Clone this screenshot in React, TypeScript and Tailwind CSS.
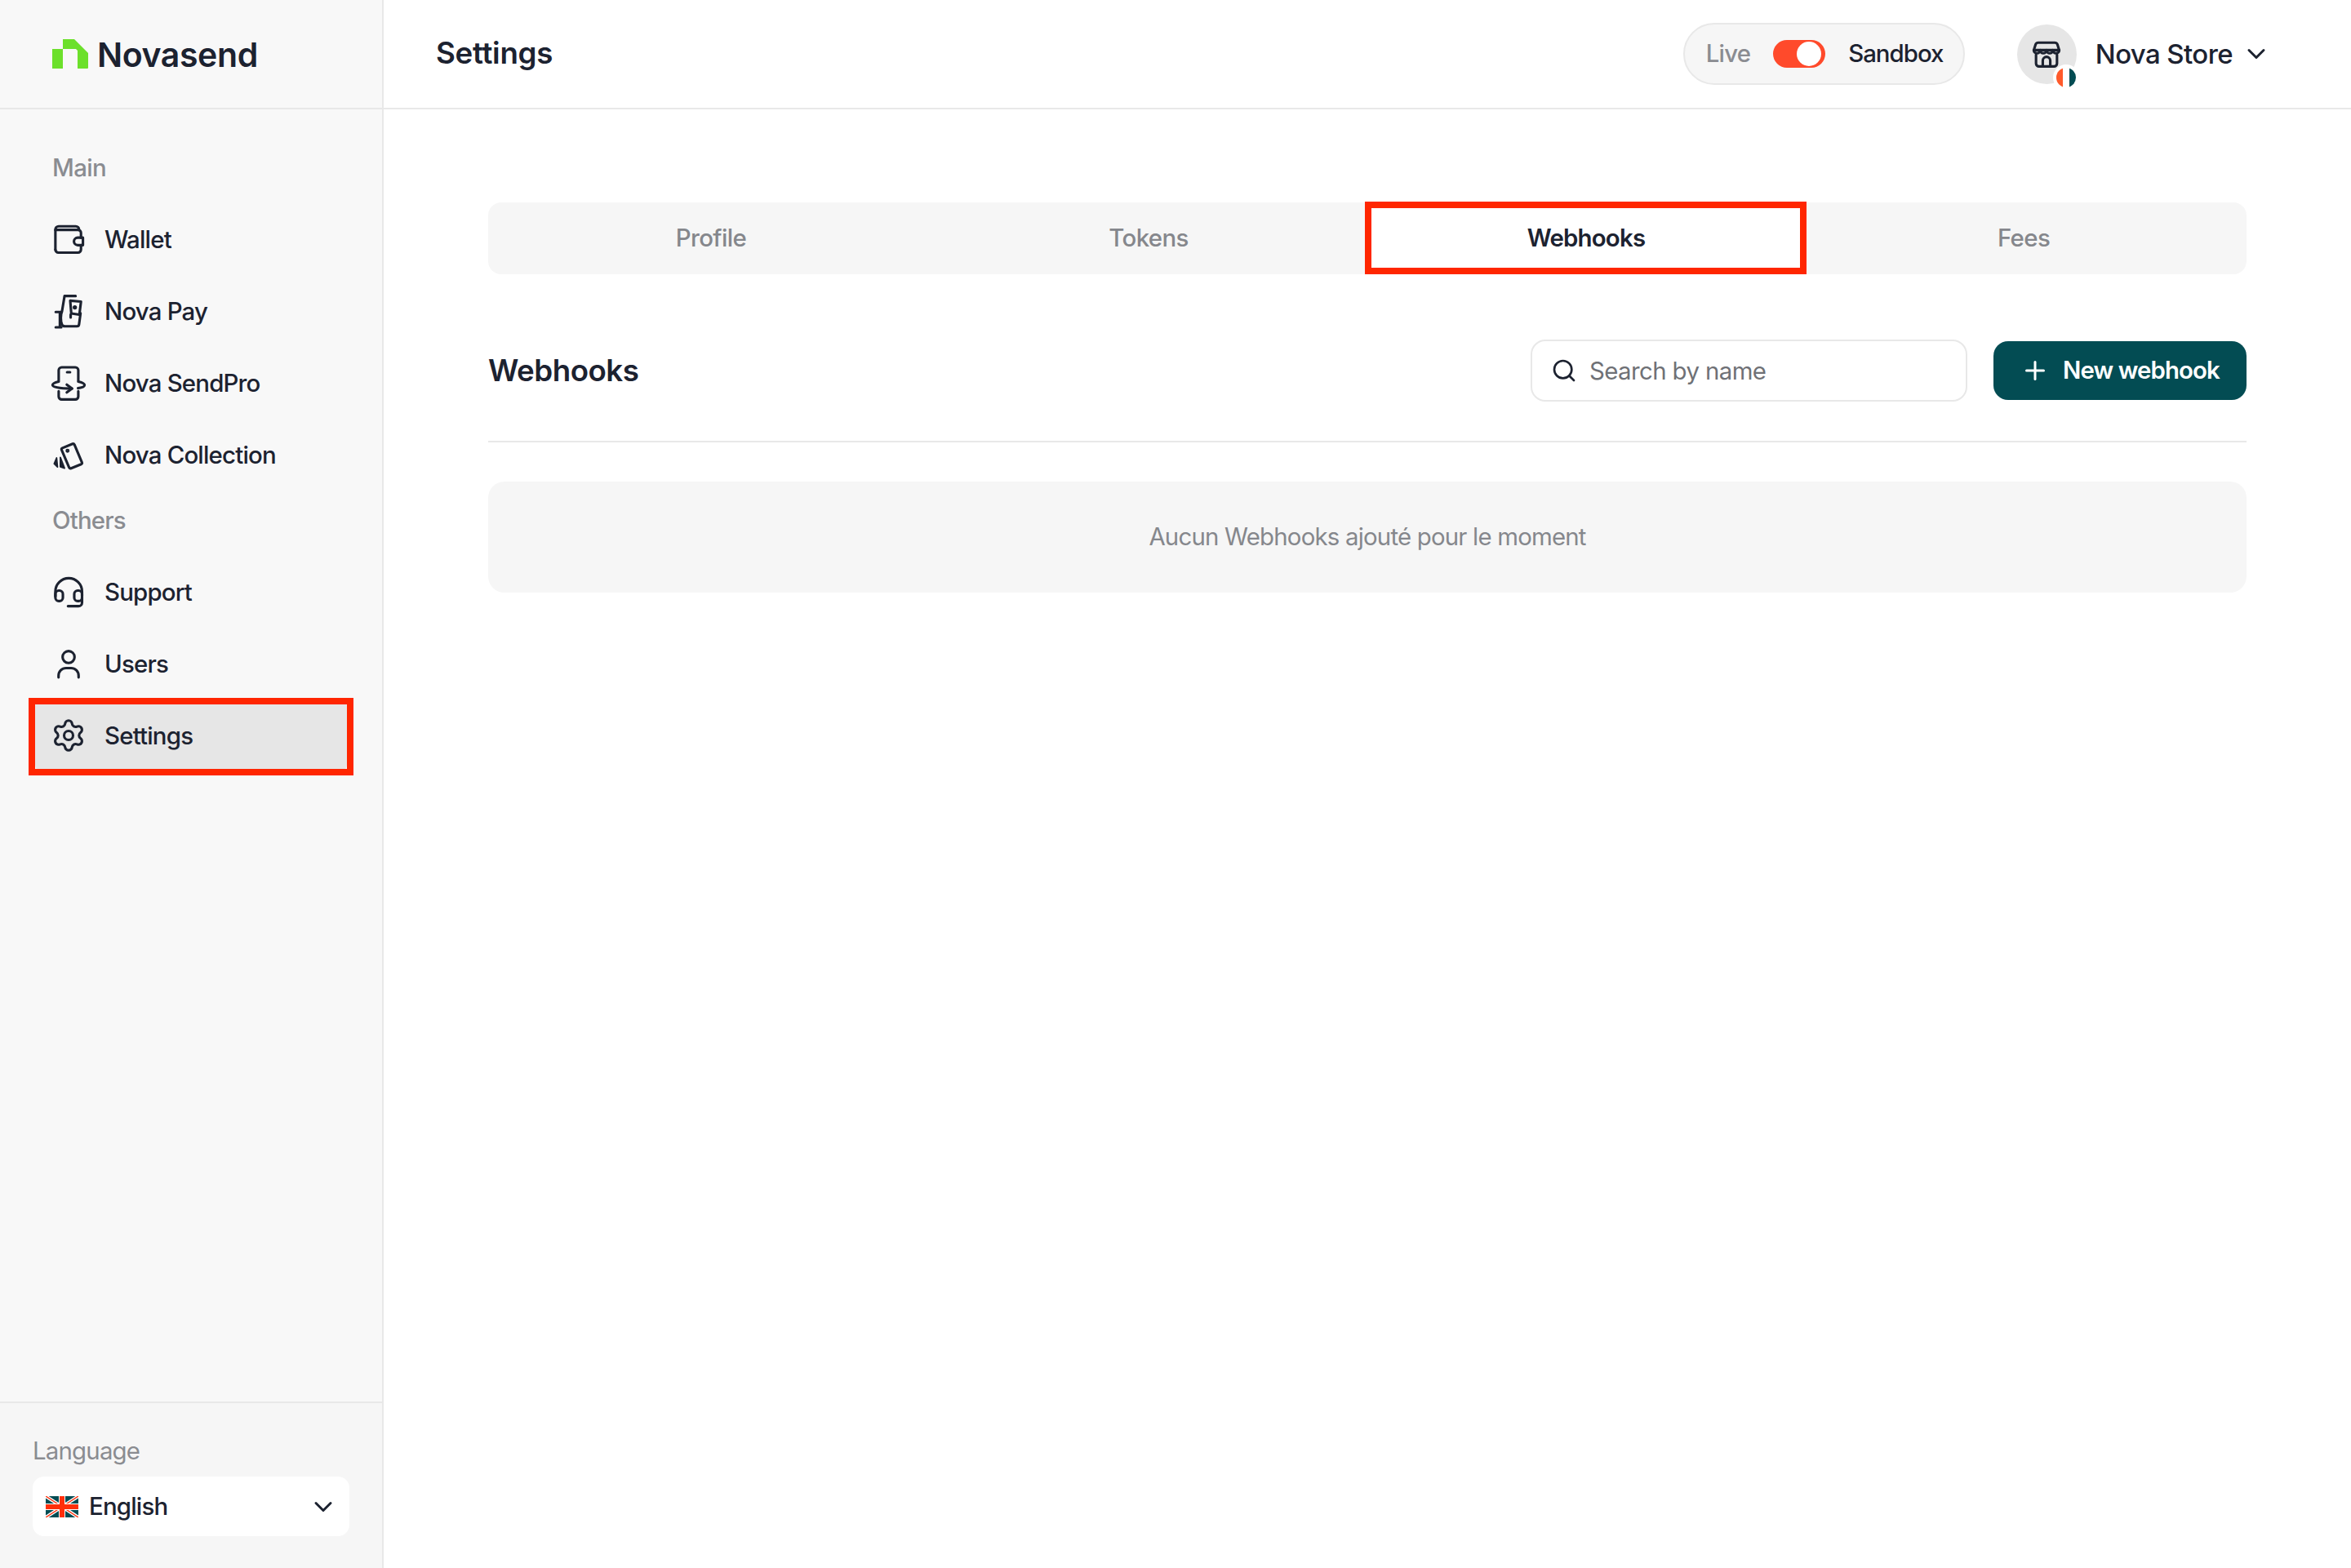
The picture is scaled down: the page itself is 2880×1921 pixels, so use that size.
import { ChevronDown, Plus, Search, Settings } from "lucide-react"

function Wallet() {
  return (
    <svg viewBox="0 0 24 24" fill="none" stroke="currentColor" strokeWidth="1.7" strokeLinecap="round" strokeLinejoin="round" className="w-[44px] h-[44px]">
      <path d="M20.3 11V7.8a2 2 0 0 0-2-2H3.2" />
      <path d="M3.2 19V5.6a2.2 2.2 0 0 1 2.2-2.2h11.4a2.2 2.2 0 0 1 2.2 2.2v.2" />
      <path d="M3.2 19a2 2 0 0 0 2 2h13.1a2 2 0 0 0 2-2v-3" />
      <path d="M21.6 11h-3.5a2.5 2.5 0 0 0 0 5h3.5z" />
    </svg>
  )
}

function NovaPayIcon() {
  return (
    <svg viewBox="0 0 24 24" fill="none" stroke="currentColor" strokeWidth="1.7" strokeLinecap="round" strokeLinejoin="round" className="w-[44px] h-[44px]">
      <path d="M16.7 2H9.3L7.6 12.3c-1 2-1 6.5 0 8.8.4.8 1 1.1 2 1.1h8c.8 0 1.3-.4 1.4-1.2l1-7.5" />
      <path d="M13.1 5.1l7.2.6-1.1 8.8-5.4-.9z" />
      <path d="M13.4 14.3v2" />
      <path d="M3.4 12.7h3.7M6.2 12.7v10.2M3.4 22.9h3.7" />
      <circle cx="16.2" cy="9.6" r=".6" fill="currentColor" />
    </svg>
  )
}

function SendProIcon() {
  return (
    <svg viewBox="0 0 24 24" fill="none" stroke="currentColor" strokeWidth="1.7" strokeLinecap="round" strokeLinejoin="round" className="w-[44px] h-[44px]">
      <path d="M5.4 10.7V3.6a2 2 0 0 1 2-2h9.1a2 2 0 0 1 2 2v7.1" />
      <path d="M11 4.9h2" />
      <path d="M5.4 17.6v3.5a2 2 0 0 0 2 2h9.1a2 2 0 0 0 2-2v-3.5" />
      <path d="M5.4 11.2c-2.6.6-4.1 1.4-4.1 2.3 0 1.3 4 2.3 13 2.3" />
      <path d="M10.8 13.2l3.5 2.6-3.5 2.6" />
      <path d="M18.5 11.2c2.7.6 4.2 1.4 4.2 2.3 0 .9-1.5 1.7-4.4 2.1" />
    </svg>
  )
}

function CollectionIcon() {
  return (
    <svg viewBox="0 0 24 24" fill="none" stroke="currentColor" strokeWidth="1.7" strokeLinecap="round" strokeLinejoin="round" className="w-[44px] h-[44px]">
      <path d="M7.9 7.6l6.8-2.8a1 1 0 0 1 1.2.5l5 11.8a1 1 0 0 1-.5 1.3l-6.7 2.7a1 1 0 0 1-1.3-.5L7.4 8.9a1 1 0 0 1 .5-1.3z" />
      <circle cx="11.3" cy="9.4" r=".5" fill="currentColor" />
      <path d="M6.5 13.8l2.8 7.3-2.8-1z" fill="currentColor" strokeWidth="1" />
      <path d="M4 14.2L2.4 18l2.2 2.2z" fill="currentColor" strokeWidth="1" />
    </svg>
  )
}

function SupportIcon() {
  return (
    <svg viewBox="0 0 24 24" fill="none" stroke="currentColor" strokeWidth="1.7" strokeLinecap="round" strokeLinejoin="round" className="w-[44px] h-[44px]">
      <path d="M3.2 15v-3.2a8.9 8.9 0 0 1 17.8 0V15" />
      <rect x="3.2" y="11.2" width="5" height="7" rx="2.3" />
      <rect x="15.8" y="11.2" width="5.2" height="7" rx="2.3" />
      <path d="M21 16v3.2a2.4 2.4 0 0 1-2.4 2.4h-7" />
    </svg>
  )
}

function UserIcon() {
  return (
    <svg viewBox="0 0 24 24" fill="none" stroke="currentColor" strokeWidth="1.7" strokeLinecap="round" strokeLinejoin="round" className="w-[44px] h-[44px]">
      <circle cx="12" cy="7.6" r="4" />
      <path d="M5.3 21.2V20a5 5 0 0 1 5-5h3.4a5 5 0 0 1 5 5v1.2" />
    </svg>
  )
}

function StoreIcon() {
  return (
    <svg viewBox="0 0 24 24" fill="none" stroke="currentColor" strokeWidth="1.7" strokeLinecap="round" strokeLinejoin="round" className="w-[44px] h-[44px]">
      <path d="M6.5 4.5h11a2 2 0 0 1 1.8 1.2l1.2 3.8H3.5l1.2-3.8a2 2 0 0 1 1.8-1.2z" />
      <path d="M3.5 9.5a2.1 2.1 0 0 0 4.25 0 2.1 2.1 0 0 0 4.25 0 2.1 2.1 0 0 0 4.25 0 2.1 2.1 0 0 0 4.25 0" />
      <path d="M5 12.5v5.9a2 2 0 0 0 2 2h10a2 2 0 0 0 2-2v-5.9" />
      <path d="M9.5 20.4v-3.9a2.5 2.5 0 0 1 5 0v3.9" />
    </svg>
  )
}

function Logo() {
  return (
    <svg viewBox="0 0 44 36" className="w-[44px] h-[36px]">
      <path d="M0 12H13V0H27L44 17V35a1 1 0 0 1-1 1H31V14L29 12H13V36H0Z" fill="#6ce02b" />
    </svg>
  )
}

function UkFlag() {
  return (
    <svg viewBox="0 0 40 26" className="w-[40px] h-[26px]">
      <rect width="40" height="26" fill="#034c53" />
      <path d="M0 0L40 26M40 0L0 26" stroke="#fff" strokeWidth="4" />
      <path d="M0 0L40 26M40 0L0 26" stroke="#ff2f0a" strokeWidth="1.4" />
      <path d="M20 0V26M0 13H40" stroke="#fff" strokeWidth="8" />
      <path d="M20 0V26M0 13H40" stroke="#ff2f0a" strokeWidth="6" />
    </svg>
  )
}

const mainItems = [
  { label: "Wallet", icon: <Wallet /> },
  { label: "Nova Pay", icon: <NovaPayIcon /> },
  { label: "Nova SendPro", icon: <SendProIcon /> },
  { label: "Nova Collection", icon: <CollectionIcon /> },
]

const otherItems = [
  { label: "Support", icon: <SupportIcon /> },
  { label: "Users", icon: <UserIcon /> },
]

function NavRow({ label, icon, active }: { label: string; icon: React.ReactNode; active?: boolean }) {
  return (
    <div className={`relative flex items-center h-[88px] ml-[43px] w-[382px] pl-[19px] gap-[22px] rounded-[8px] text-[29.4px] tracking-[-0.8px] font-medium text-[#1c2230] ${active ? "bg-[#e6e6e6]" : ""}`}>
      {icon}
      <span className="mt-[2px]">{label}</span>
      {active && <div className="absolute -left-[8px] -right-[8px] -top-[2px] -bottom-[5px] border-[8px] border-[#ff2600]" />}
    </div>
  )
}

const tabs = ["Profile", "Tokens", "Webhooks", "Fees"]

export default function App() {
  return (
    <div className="flex w-full min-h-screen bg-white font-['Inter',sans-serif] text-[#1c2230]">
      {/* Sidebar */}
      <aside className="flex flex-col w-[470px] shrink-0 h-[1921px] bg-[#f8f8f8] border-r-2 border-[#e8e8e8]">
        <div className="flex items-center h-[134px] pl-[64px] gap-[11px] border-b-2 border-[#e8e8e8]">
          <Logo />
          <span className="mt-[4px] text-[41px] font-semibold tracking-[-0.4px]">Novasend</span>
        </div>
        <div className="flex-1">
          <div className="mt-[50px] mb-[21px] ml-[64px] h-[44px] leading-[44px] text-[29.4px] tracking-[-0.6px] font-medium text-[#8a8c91]">Main</div>
          {mainItems.map((item) => (
            <NavRow key={item.label} label={item.label} icon={item.icon} />
          ))}
          <div className="mt-[15px] mb-[21px] ml-[64px] h-[44px] leading-[44px] text-[29.4px] tracking-[-0.8px] font-medium text-[#8a8c91]">Others</div>
          {otherItems.map((item) => (
            <NavRow key={item.label} label={item.label} icon={item.icon} />
          ))}
          <NavRow label="Settings" icon={<Settings className="w-[44px] h-[44px]" strokeWidth={1.7} />} active />
        </div>
        <div className="h-[204px] bg-[#f6f6f6] border-t-2 border-[#e8e8e8] px-[40px] pt-[37px]">
          <div className="h-[44px] leading-[44px] text-[29.4px] tracking-[-0.8px] text-[#8a8c91]">Language</div>
          <div className="mt-[9px] flex items-center h-[73px] w-[388px] pl-[16px] pr-[14px] gap-[13px] bg-white rounded-[14px] text-[29.4px] tracking-[-0.8px] font-medium">
            <UkFlag />
            <span className="flex-1 mt-[2px]">English</span>
            <ChevronDown className="w-[36px] h-[36px]" strokeWidth={2} />
          </div>
        </div>
      </aside>

      <div className="flex-1 min-w-0">
        {/* Top bar */}
        <header className="flex items-center h-[134px] pl-[64px] border-b-2 border-[#e8e8e8]">
          <h1 className="flex-1 -mt-[2px] text-[36.7px] tracking-[-0.3px] font-semibold">Settings</h1>
          <div className="flex items-center h-[76px] w-[345px] pl-[26px] gap-[28px] rounded-full bg-[#f6f6f6] border-2 border-[#e8e8e8] text-[29.4px] tracking-[-0.8px] font-medium">
            <span className="text-[#8a8c91]">Live</span>
            <div className="flex items-center justify-end w-[64px] h-[34px] pr-[5px] rounded-full bg-[#ff4a2b]">
              <div className="w-[30px] h-[30px] rounded-full bg-white" />
            </div>
            <span className="tracking-[-1px]">Sandbox</span>
          </div>
          <div className="relative flex items-center justify-center w-[73px] h-[73px] ml-[64px] rounded-full bg-[#e6e6e6]">
            <StoreIcon />
            <div className="absolute -right-[3px] -bottom-[8px] flex w-[32px] h-[32px] border-[4px] border-white rounded-full overflow-hidden">
              <span className="flex-1 bg-[#ff5a2b]" />
              <span className="flex-1 bg-white" />
              <span className="flex-1 bg-[#034c53]" />
            </div>
          </div>
          <span className="ml-[23px] mt-[2px] text-[33px] tracking-[-0.6px] font-medium">Nova Store</span>
          <ChevronDown className="ml-[11px] mr-[98px] w-[36px] h-[36px]" strokeWidth={2} />
        </header>

        {/* Content */}
        <main className="pl-[128px] pr-[128px] pt-[114px]">
          <div className="flex h-[88px] px-[5px] rounded-[16px] bg-[#f6f6f6] text-[29.4px] tracking-[-0.6px] font-medium text-[#85878c]">
            {tabs.map((tab) =>
              tab === "Webhooks" ? (
                <div key={tab} className="relative flex-1 flex items-center justify-center bg-white font-semibold tracking-[-0.8px] text-[#1c2230]">
                  {tab}
                  <div className="absolute -left-[3px] -right-[2px] -top-[1px] bottom-0 border-[8px] border-[#ff2600]" />
                </div>
              ) : (
                <div key={tab} className="flex-1 flex items-center justify-center">{tab}</div>
              )
            )}
          </div>

          <div className="flex items-center mt-[80px] h-[76px]">
            <h2 className="flex-1 text-[36.7px] tracking-[-0.5px] font-semibold">Webhooks</h2>
            <div className="flex items-center w-[535px] h-[76px] pl-[23px] gap-[15px] rounded-[18px] bg-white border-2 border-[#e8e8e8] text-[29.4px] tracking-[-0.6px] text-[#6f7176]">
              <Search className="w-[32px] h-[32px] text-[#1c2230]" strokeWidth={2} />
              <span className="mt-[2px]">Search by name</span>
            </div>
            <button className="flex items-center justify-center ml-[32px] w-[310px] h-[72px] gap-[16px] rounded-[18px] bg-[#034c53] text-white text-[29.4px] tracking-[-0.9px] font-semibold">
              <Plus className="w-[36px] h-[36px]" strokeWidth={2} />
              New webhook
            </button>
          </div>

          <div className="mt-[48px] h-[2px] bg-[#e8e8e8]" />

          <div className="flex items-center justify-center mt-[48px] h-[136px] rounded-[20px] bg-[#f6f6f6] text-[29.4px] tracking-[-0.8px] text-[#85878c]">
            Aucun Webhooks ajouté pour le moment
          </div>
        </main>
      </div>
    </div>
  )
}
